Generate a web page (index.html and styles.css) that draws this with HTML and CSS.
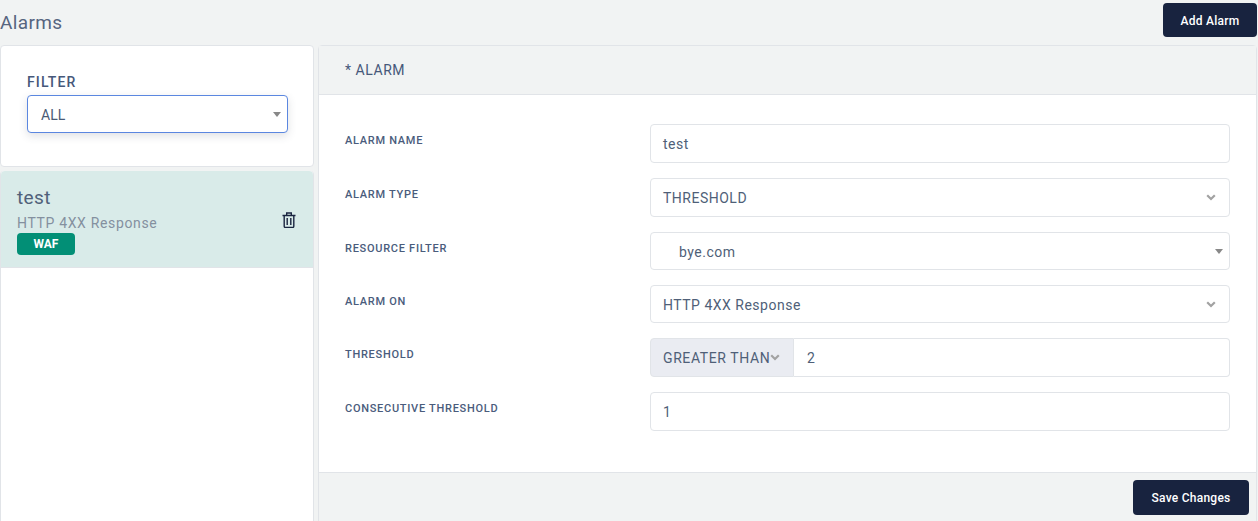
FILE: index.html
```html
<!DOCTYPE html>
<html lang="en">
<head>
<meta charset="utf-8">
<title>Alarms</title>
<link rel="stylesheet" href="styles.css">
</head>
<body>
<div class="page">
  <header class="topbar">
    <h1 class="title">Alarms</h1>
    <button class="btn btn-add" type="button">Add Alarm</button>
  </header>
  <main class="columns">
    <aside class="side">
      <section class="filter-card">
        <div class="filter-label">FILTER</div>
        <div class="filter-select">
          <span>ALL</span>
          <svg class="caret" width="8" height="5" viewBox="0 0 8 5"><path d="M0 0h8L4 5z"/></svg>
        </div>
      </section>
      <section class="list-card">
        <div class="list-item">
          <div class="item-text">
            <div class="item-name">test</div>
            <div class="item-sub">HTTP 4XX Response</div>
            <span class="badge">WAF</span>
          </div>
          <svg class="trash" width="14" height="16" viewBox="0 0 14 16" fill="none" stroke="#1a2540" stroke-width="1.4">
            <path d="M0.5 3.5h13M4.7 3.2V1h4.6v2.2M2.2 3.5v10.8c0 .7.5 1.2 1.2 1.2h7.2c.7 0 1.2-.5 1.2-1.2V3.5M5.2 6v7M8.8 6v7"/>
          </svg>
        </div>
      </section>
    </aside>
    <section class="form-card">
      <div class="form-head">* ALARM</div>
      <div class="form-body">
        <div class="row row-tall">
          <label class="row-label">ALARM NAME</label>
          <div class="control"><span>test</span></div>
        </div>
        <div class="row row-tall">
          <label class="row-label">ALARM TYPE</label>
          <div class="control"><span>THRESHOLD</span>
            <svg class="chev" width="10" height="7" viewBox="0 0 10 7"><path d="M1.2 1.2L5 5l3.8-3.8"/></svg>
          </div>
        </div>
        <div class="row row-short">
          <label class="row-label">RESOURCE FILTER</label>
          <div class="control control-res"><span class="res-value">bye.com</span>
            <svg class="caret caret-res" width="8" height="5" viewBox="0 0 8 5"><path d="M0 0h8L4 5z"/></svg>
          </div>
        </div>
        <div class="row row-short">
          <label class="row-label">ALARM ON</label>
          <div class="control"><span>HTTP 4XX Response</span>
            <svg class="chev" width="10" height="7" viewBox="0 0 10 7"><path d="M1.2 1.2L5 5l3.8-3.8"/></svg>
          </div>
        </div>
        <div class="row row-tall">
          <label class="row-label">THRESHOLD</label>
          <div class="group">
            <div class="group-select"><span>GREATER THAN</span>
              <svg class="chev chev-group" width="10" height="7" viewBox="0 0 10 7"><path d="M1.2 1.2L5 5l3.8-3.8"/></svg>
            </div>
            <div class="group-input"><span>2</span></div>
          </div>
        </div>
        <div class="row row-tall">
          <label class="row-label">CONSECUTIVE THRESHOLD</label>
          <div class="control"><span>1</span></div>
        </div>
      </div>
      <div class="form-foot">
        <button class="btn btn-save" type="button">Save Changes</button>
      </div>
    </section>
  </main>
</div>
</body>
</html>
```
FILE: styles.css
```css
* { box-sizing: border-box; }
html, body { margin: 0; height: 100%; overflow: hidden; }
body {
  background: #f1f3f3;
  font-family: "Roboto", "Liberation Sans", sans-serif;
  color: #4a5a75;
}
.page { width: 1258px; }
.topbar {
  height: 45px;
  display: flex;
  justify-content: space-between;
  align-items: flex-start;
  padding: 3px 1px 0 0;
}
.title {
  margin: 9px 0 0;
  font-size: 19px;
  line-height: 22px;
  font-weight: 400;
  letter-spacing: .35px;
  color: #56657f;
}
.btn {
  border: 0;
  border-radius: 4px;
  background: #18233f;
  color: #fff;
  font-family: inherit;
  font-size: 12px;
  font-weight: 500;
  letter-spacing: .25px;
  height: 34px;
  padding: 1px 0 0;
}
.btn-add { width: 94px; }
.btn-save { width: 116px; height: 35px; padding: 0; }
.columns {
  display: grid;
  grid-template-columns: 314px 1fr;
  column-gap: 4px;
  padding-right: 1px;
  height: 490px;
}
.side { display: flex; flex-direction: column; gap: 4px; }
.filter-card {
  height: 122px;
  background: #fff;
  border: 1px solid #e1e4e8;
  border-radius: 4px;
  padding: 27px 26px 0;
}
.filter-label {
  font-size: 14px;
  line-height: 18px;
  font-weight: 500;
  letter-spacing: 1.1px;
  color: #46587a;
  margin-bottom: 4px;
}
.filter-select {
  width: 261px;
  height: 38px;
  border: 1px solid #5b87e0;
  border-radius: 4px;
  background: #fff;
  box-shadow: 0 3px 8px rgba(60, 70, 90, .16);
  display: flex;
  align-items: center;
  justify-content: space-between;
  padding: 1px 6px 0 13px;
  font-size: 14px;
  color: #4a5a75;
}
.caret { fill: #888; }
.list-card {
  flex: 1;
  background: #fff;
  border: 1px solid #e1e4e8;
  border-top: 0;
  border-radius: 4px 4px 0 0;
}
.list-item {
  height: 97px;
  background: #d9ebe9;
  border-bottom: 1px solid #e1e4e8;
  border-radius: 4px 4px 0 0;
  display: flex;
  justify-content: space-between;
  align-items: center;
  padding: 0 17px 0 16px;
}
.item-text { display: flex; flex-direction: column; align-items: flex-start; }
.item-name { font-size: 19px; line-height: 24px; letter-spacing: .4px; color: #506079; margin-top: 2px; }
.item-sub { font-size: 14px; line-height: 18px; letter-spacing: .65px; color: #84909f; margin-top: 4px; }
.badge {
  width: 58px;
  height: 22px;
  margin-top: 1px;
  background: #028f76;
  border-radius: 4px;
  color: #fff;
  font-size: 12px;
  font-weight: 700;
  line-height: 22px;
  text-align: center;
}
.trash { margin-top: 2px; }
.form-card {
  background: #fff;
  border: 1px solid #e1e4e8;
  border-radius: 4px 4px 0 0;
  display: flex;
  flex-direction: column;
}
.form-head {
  height: 49px;
  background: #f1f3f3;
  border-bottom: 1px solid #e1e4e8;
  padding-left: 26px;
  display: flex;
  align-items: center;
  font-size: 14px;
  letter-spacing: .55px;
  color: #46587a;
}
.form-body {
  height: 377px;
  padding: 29px 26px 0 26px;
  display: flex;
  flex-direction: column;
}
.row { display: grid; grid-template-columns: 305px 1fr; align-items: start; }
.row-tall { height: 54px; }
.row-short { height: 53px; }
.row-label {
  font-size: 11px;
  font-weight: 500;
  line-height: 14px;
  letter-spacing: .72px;
  color: #4a5c7c;
  padding-top: 10px;
}
.control {
  height: 39px;
  background: #fff;
  border: 1px solid #e1e4e8;
  border-radius: 4px;
  display: flex;
  align-items: center;
  justify-content: space-between;
  padding: 0 13px 0 12px;
  font-size: 14px;
  letter-spacing: .5px;
  color: #4f5f78;
}
.row-short .control { height: 38px; padding-top: 1px; }
.row-short .control-res { padding: 1px 6px 0 28px; }
.chev { fill: none; stroke: #a2a2a2; stroke-width: 2.2; }
.group { display: flex; height: 39px; }
.group-select {
  width: 144px;
  background: #eaecf2;
  border: 1px solid #e1e4e8;
  border-radius: 4px 0 0 4px;
  display: flex;
  align-items: center;
  padding-left: 12px;
  font-size: 14px;
  letter-spacing: .6px;
  color: #4f5f78;
  white-space: nowrap;
}
.chev-group { margin-left: 0; flex: none; }
.group-input {
  flex: 1;
  border: 1px solid #e1e4e8;
  border-left: 0;
  border-radius: 0 4px 4px 0;
  display: flex;
  align-items: center;
  padding-left: 13px;
  font-size: 14px;
  color: #4f5f78;
}
.form-foot {
  flex: 1;
  background: #f1f3f3;
  border-top: 1px solid #e1e4e8;
  display: flex;
  justify-content: flex-end;
  align-items: flex-start;
  padding: 7px 7px 0 0;
}
```
